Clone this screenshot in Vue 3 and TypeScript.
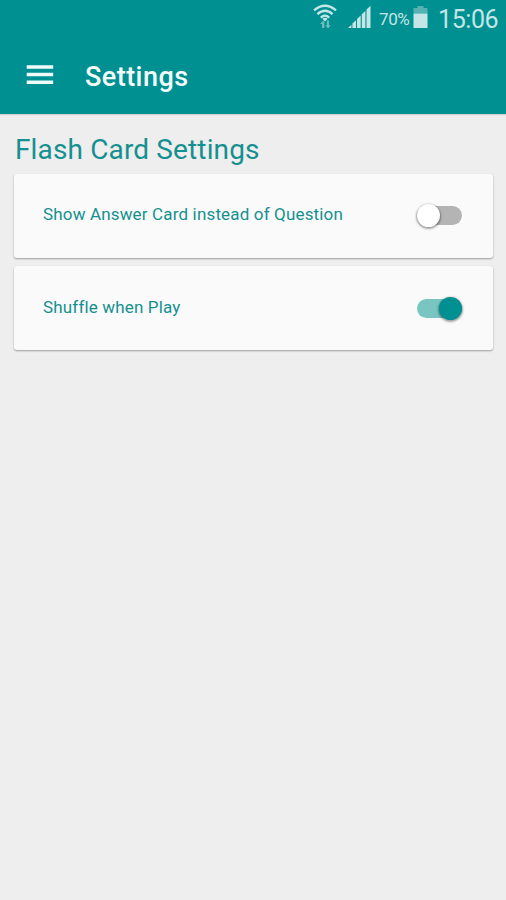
<script setup lang="ts">
import { ref } from 'vue'

interface Setting {
  id: string
  label: string
  on: boolean
}

const settings = ref<Setting[]>([
  { id: 'answer', label: 'Show Answer Card instead of Question', on: false },
  { id: 'shuffle', label: 'Shuffle when Play', on: true },
])
</script>

<template>
  <div class="screen">
    <header class="top">
      <div class="status">
        <svg class="wifi" width="24" height="27" viewBox="0 0 24 27">
          <g fill="none" stroke="#c5e6e6" stroke-width="2.3">
            <path d="M1 7.4Q12 -2 23 7.4" />
            <path d="M4.4 11.2Q12 4.4 19.6 11.2" />
            <path d="M7.8 14.6Q12 10.6 16.2 14.6" />
          </g>
          <path d="M9.4 15.8Q12 13.8 14.6 15.8L12 18.6Z" fill="#c5e6e6" />
          <g fill="#6dbcbd">
            <path d="M9 25V21H7L10.2 17.5L11.4 19V25ZM13.8 17.5V22.3H12.3L15 25.5L17.8 22.3H16V17.5Z" />
          </g>
        </svg>
        <svg class="signal" width="24" height="24" viewBox="0 0 24 24" fill="#c5e6e6">
          <path d="M0 23L3.4 19.8V23ZM4.4 18.6L8 15.3V23H4.4ZM9 14L12.7 10.6V23H9ZM13.8 9.3L17.4 5.9V23H13.8ZM18.5 4.5L22.5 .8V23H18.5Z" />
        </svg>
        <span class="percent">70%</span>
        <svg class="battery" width="15" height="23" viewBox="0 0 15 23">
          <path d="M4.5 0H10.5V2H14.5V7.5H.5V2H4.5Z" fill="#55b1b2" />
          <path d="M.5 7.5H14.5V22H.5Z" fill="#c5e6e6" />
        </svg>
        <span class="clock">15:06</span>
      </div>
      <div class="bar">
        <button class="menu" aria-label="Menu">
          <svg width="28" height="20" viewBox="0 0 28 20" fill="#effafa">
            <path d="M.7 .3H27.2V3.8H.7ZM.7 7.8H27.2V11.3H.7ZM.7 15.4H27.2V18.9H.7Z" />
          </svg>
        </button>
        <h1>Settings</h1>
      </div>
    </header>
    <main>
      <h2>Flash Card Settings</h2>
      <section v-for="s in settings" :key="s.id" class="card">
        <span class="label">{{ s.label }}</span>
        <button
          class="switch"
          :class="{ on: s.on }"
          role="switch"
          :aria-checked="s.on"
          :aria-label="s.label"
          @click="s.on = !s.on"
        >
          <span class="thumb" />
        </button>
      </section>
    </main>
  </div>
</template>

<style>
body {
  margin: 0;
  background: #eeeeee;
}
</style>

<style scoped>
.screen {
  min-height: 900px;
  background: #eeeeee;
  font-family: Roboto, "Liberation Sans", sans-serif;
}
.top {
  height: 114px;
  background: #009091;
  box-shadow: 0 1px 1px rgba(0, 0, 0, 0.12);
}
.status {
  display: flex;
  align-items: flex-start;
  height: 38px;
  padding-left: 313px;
  color: #c5e6e6;
  white-space: nowrap;
}
.wifi {
  margin-top: 3px;
}
.signal {
  margin: 5px 0 0 11px;
}
.percent {
  margin: 9px 0 0 7px;
  width: 34px;
  font-size: 17px;
  line-height: 20px;
  letter-spacing: -0.4px;
}
.battery {
  margin-top: 6px;
}
.clock {
  margin: 4px 0 0 10px;
  font-size: 25px;
  line-height: 32px;
  letter-spacing: -0.4px;
}
.bar {
  display: flex;
  align-items: flex-start;
  height: 76px;
  padding-left: 26px;
}
.menu {
  display: flex;
  margin: 27px 0 0;
  padding: 0;
  border: 0;
  background: none;
}
h1 {
  margin: 21px 0 0 31px;
  color: #f4fcfc;
  font-size: 27px;
  font-weight: 500;
  line-height: 36px;
  letter-spacing: 0.45px;
}
main {
  display: flex;
  flex-direction: column;
  gap: 8px;
  padding: 18px 13px 0 14px;
}
h2 {
  margin: 0 0 -1px 1px;
  color: #159090;
  font-size: 28px;
  font-weight: 400;
  line-height: 35px;
  letter-spacing: 0.14px;
}
.card {
  display: flex;
  align-items: center;
  justify-content: space-between;
  box-sizing: border-box;
  height: 84px;
  padding: 0 31px 0 29px;
  border-radius: 3px;
  background: #fafafa;
  box-shadow: 0 1px 2px rgba(0, 0, 0, 0.35);
}
.label {
  margin-top: -4px;
  color: #159090;
  font-size: 17px;
  line-height: 24px;
  letter-spacing: 0.16px;
}
.card:last-child .label {
  margin-top: -2px;
}
.switch {
  display: flex;
  align-items: center;
  width: 45px;
  height: 19px;
  margin-top: -1px;
  padding: 0;
  border: 0;
  border-radius: 10px;
  background: #b4b4b4;
}
.thumb {
  width: 23px;
  height: 23px;
  flex: none;
  border-radius: 50%;
  background: #ffffff;
  box-shadow: 0 1px 2px 1px rgba(0, 0, 0, 0.35);
}
.switch.on {
  justify-content: flex-end;
  margin-top: 0;
  background: #78c5c2;
}
.on .thumb {
  background: #009091;
}
</style>
